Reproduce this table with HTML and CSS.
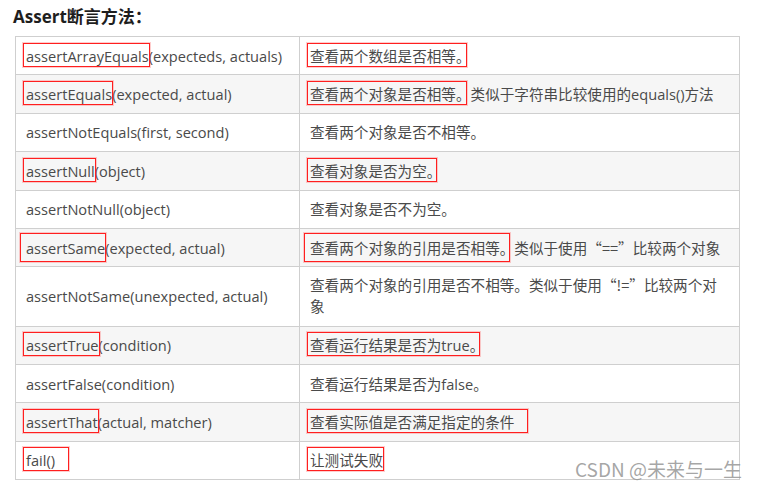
FILE: index.html
```html
<!DOCTYPE html>
<html lang="zh-CN">
<head>
<meta charset="utf-8">
<title>Assert断言方法</title>
<link rel="stylesheet" href="styles.css">
</head>
<body>
<div class="page">
  <h3 class="title">Assert断言方法：</h3>
  <table class="asserts">
    <colgroup><col class="c1"><col class="c2"></colgroup>
    <tbody>
      <tr><td><span class="hl">assertArrayEquals</span>(expecteds, actuals)</td><td><span class="hl dot">查看两个数组是否相等。</span></td></tr>
      <tr><td><span class="hl">assertEquals</span>(expected, actual)</td><td><span class="hl dot">查看两个对象是否相等。</span>类似于字符串比较使用的equals()方法</td></tr>
      <tr><td>assertNotEquals(first, second)</td><td>查看两个对象是否不相等。</td></tr>
      <tr><td><span class="hl">assertNull</span>(object)</td><td><span class="hl dot">查看对象是否为空。</span></td></tr>
      <tr><td>assertNotNull(object)</td><td>查看对象是否不为空。</td></tr>
      <tr><td><span class="hl tall">assertSame</span>(expected, actual)</td><td><span class="hl tall dot">查看两个对象的引用是否相等。</span>类似于使用<span class="cjk">“==”</span>比较两个对象</td></tr>
      <tr><td>assertNotSame(unexpected, actual)</td><td class="wrap">查看两个对象的引用是否不相等。类似于使用<span class="cjk">“!=”</span>比较两个对象</td></tr>
      <tr><td><span class="hl">assertTrue</span>(condition)</td><td><span class="hl dot">查看运行结果是否为true。</span></td></tr>
      <tr><td>assertFalse(condition)</td><td>查看运行结果是否为false。</td></tr>
      <tr><td><span class="hl">assertThat</span>(actual, matcher)</td><td><span class="hl wide">查看实际值是否满足指定的条件</span></td></tr>
      <tr><td><span class="hl wide">fail()</span></td><td><span class="hl">让测试失败</span></td></tr>
    </tbody>
  </table>
  <div class="watermark">CSDN @未来与一生</div>
</div>
</body>
</html>
```

FILE: styles.css
```css
html, body {
  margin: 0;
  padding: 0;
  background: #ffffff;
}

.page {
  position: relative;
  width: 757px;
  height: 489px;
  padding: 4px 0 0 15px;
  box-sizing: border-box;
  font-family: "Open Sans", "Noto Sans CJK SC", sans-serif;
}

.title {
  margin: 0 0 0 -2px;
  font-family: "Open Sans", "Noto Sans CJK SC", sans-serif;
  font-size: 17px;
  font-weight: 700;
  line-height: 26px;
  color: #1e1e1e;
  height: 32px;
}

.asserts {
  border-collapse: collapse;
  width: 724px;
  table-layout: fixed;
  font-size: 14.6px;
  color: #4a4a4a;
}

.c1 { width: 284px; }
.c2 { width: 440px; }

.asserts td {
  border: 1px solid #cfcfcf;
  padding: 8.7px 10px;
  line-height: 20px;
  vertical-align: middle;
}

.asserts td.wrap {
  line-height: 21px;
  padding: 8.2px 10px;
}

.asserts tr:nth-child(even) td {
  background: #f6f6f6;
}

.cjk {
  font-family: "Noto Sans CJK SC", sans-serif;
  line-height: 1;
}

.hl {
  position: relative;
}

.hl::after {
  content: "";
  position: absolute;
  left: -3px;
  right: -1px;
  top: -3px;
  bottom: -1px;
  border: 1px solid #ff1f1f;
  box-shadow: 0 0 0 1px rgba(255, 90, 90, 0.3);
  pointer-events: none;
}

.hl.dot::after {
  right: 4px;
}

.hl.tall::after {
  top: -5px;
  bottom: -4px;
  left: -6px;
}

.hl.wide::after {
  right: -14px;
}

.watermark {
  position: absolute;
  right: 15px;
  bottom: 8px;
  font-family: "Noto Sans CJK SC", "Open Sans", sans-serif;
  font-size: 19px;
  line-height: 24px;
  color: rgba(150, 150, 150, 0.85);
}
```
